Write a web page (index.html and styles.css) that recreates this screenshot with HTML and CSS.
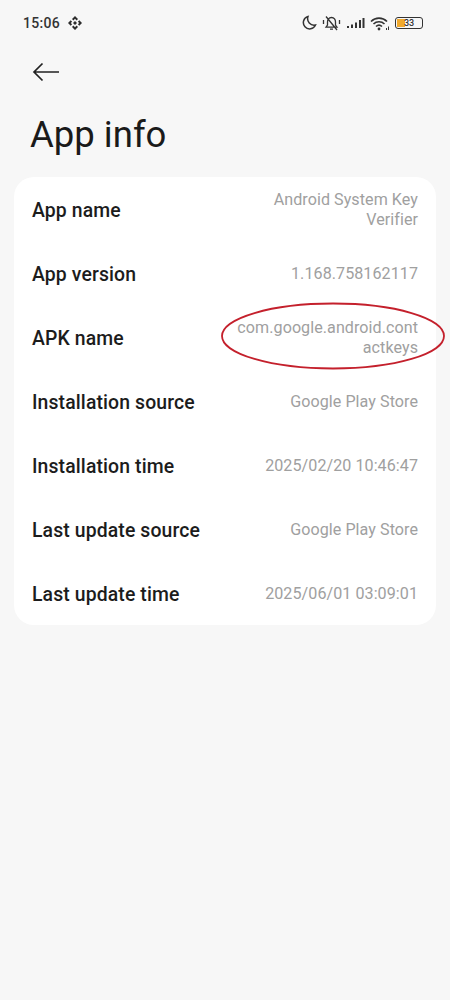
FILE: index.html
```html
<!DOCTYPE html>
<html lang="en">
<head>
<meta charset="utf-8">
<title>App info</title>
<link rel="stylesheet" href="styles.css">
</head>
<body>
<div class="status">
  <div class="status-left">
    <span class="time">15:06</span>
    <svg class="binance" width="14" height="14" viewBox="0 0 14 14"><path d="M7 0 10 3 8.600 4.400 7 2.800 5.400 4.400 4 3ZM2.700 4.300 4.100 5.700 2.800 7 4.100 8.300 2.700 9.700 0 7ZM11.300 4.300 14 7 11.300 9.700 9.900 8.300 11.200 7 9.900 5.700ZM7 5 9 7 7 9 5 7ZM4 11 5.400 9.600 7 11.200 8.600 9.600 10 11 7 14Z" fill="#2c2c2c"/></svg>
  </div>
  <div class="status-right">
    <svg width="15" height="16" viewBox="0 0 15 16"><path d="M6 1.500A6.300 6.300 0 1 0 13.500 10 6.500 6.500 0 0 1 6 1.500Z" fill="none" stroke="#333" stroke-width="1.500"/></svg>
    <svg width="19" height="17" viewBox="0 0 19 17"><path d="M9.500 2.500c-2.800 0-4 2-4 4.500v3L4 12.200h11L13.500 10V7c0-2.500-1.200-4.500-4-4.500ZM8 14.200h3M4 1.500 15 15M1.500 5v4M17.500 5v4" fill="none" stroke="#333" stroke-width="1.300"/></svg>
    <svg width="19" height="12" viewBox="0 0 19 12"><path d="M1 9h2v2H1zM5 7.500h2V11H5zM9 5.500h2V11H9zM13 3h2v8h-2zM16.500 1h2v10h-2z" fill="#333"/></svg>
    <svg width="20" height="15" viewBox="0 0 20 15"><path d="M1 5.500C5.500 1 12.500 1 17 5.500M3.500 8C6.500 5 11.500 5 14.500 8M6 10.500c1.800-1.700 4.200-1.700 6 0" fill="none" stroke="#333" stroke-width="1.600"/><circle cx="9" cy="13" r="1.400" fill="#333"/><path d="M16 12h1v2h-1zM18 10.500h1V14h-1z" fill="#333"/></svg>
    <div class="battery"><div class="battery-fill"></div><span class="battery-num">33</span></div>
  </div>
</div>
<div class="nav">
  <svg width="28" height="20" viewBox="0 0 28 20"><path d="M27 10H2M10.500 1.500 2 10l8.500 8.500" fill="none" stroke="#222" stroke-width="1.700"/></svg>
</div>
<h1 class="title">App info</h1>
<div class="card">
  <div class="row"><span class="label">App name</span><span class="value">Android System Key Verifier</span></div>
  <div class="row"><span class="label">App version</span><span class="value">1.168.758162117</span></div>
  <div class="row">
    <span class="label">APK name</span><span class="value value-apk">com.google.android.cont actkeys</span>
    <svg class="ellipse" width="226" height="70" viewBox="0 0 226 70"><ellipse cx="113" cy="35" rx="111" ry="32.500" fill="none" stroke="#c4202c" stroke-width="1.800"/></svg>
  </div>
  <div class="row"><span class="label">Installation source</span><span class="value">Google Play Store</span></div>
  <div class="row"><span class="label">Installation time</span><span class="value">2025/02/20 10:46:47</span></div>
  <div class="row"><span class="label">Last update source</span><span class="value">Google Play Store</span></div>
  <div class="row"><span class="label">Last update time</span><span class="value">2025/06/01 03:09:01</span></div>
</div>
</body>
</html>
```
FILE: styles.css
```css
html, body { margin: 0; padding: 0; }
body { width: 450px; height: 1000px; overflow: hidden; background: #f7f7f7; font-family: Roboto, "Liberation Sans", sans-serif; color: #1c1c1c; }
.status { display: flex; justify-content: space-between; align-items: center; height: 16px; padding: 15px 27px 0 23px; }
.status-left { display: flex; align-items: center; gap: 8px; }
.time { font-size: 14px; font-weight: 500; color: #333; letter-spacing: .3px; }
.status-right { display: flex; align-items: center; gap: 5px; }
.battery { position: relative; width: 26px; height: 10px; border: 1.200px solid #333; border-radius: 3px; display: flex; align-items: center; justify-content: center; }
.battery-fill { position: absolute; left: 1px; top: 1px; bottom: 1px; width: 8px; background: #f0a92e; }
.battery-num { position: relative; font-size: 9px; font-weight: 500; color: #333; }
.nav { padding: 29px 0 0 32px; height: 24px; display: flex; align-items: center; }
.title { margin: 29px 0 0 30px; font-size: 36.500px; line-height: 44px; font-weight: 400; color: #1a1a1a; }
.card { margin: 20px 14px 0; background: #fff; border-radius: 20px; padding: 1px 18px 0; height: 448px; box-sizing: border-box; }
.row { position: relative; display: flex; justify-content: space-between; align-items: center; height: 64px; }
.label { font-size: 19.400px; font-weight: 500; letter-spacing: .12px; color: #1c1c1c; white-space: nowrap; }
.value { width: 190px; text-align: right; font-size: 16.100px; letter-spacing: .06px; line-height: 20px; color: #a0a0a0; }
.value-apk { overflow-wrap: anywhere; }
.ellipse { position: absolute; right: -28px; top: -5px; }
```
